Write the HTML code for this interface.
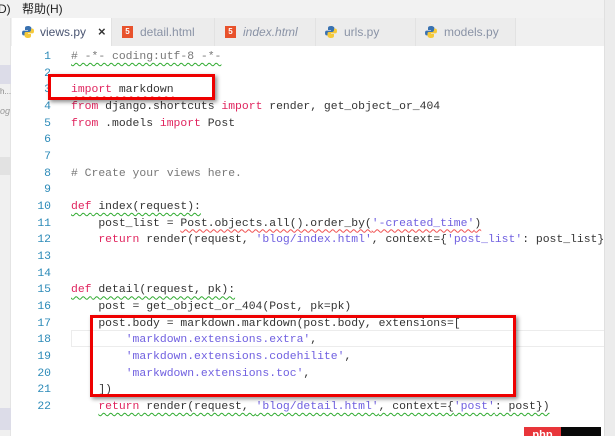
<!DOCTYPE html>
<html><head><meta charset="utf-8"><style>
*{margin:0;padding:0;box-sizing:border-box}
body{width:615px;height:436px;overflow:hidden;background:#fff;position:relative;font-family:"Liberation Sans","Noto Sans CJK SC",sans-serif}
.menu{position:absolute;left:0;top:0;width:615px;height:18px;background:#f2f2f2;font-size:12px;color:#222;line-height:18px}
.left{position:absolute;left:0;top:18px;width:11px;height:418px;background:#f0f0f0;border-right:1px solid #e4e4e4}
.tabs{position:absolute;left:11px;top:18px;width:594px;height:28px;background:#f0f0f0}
.tab{position:absolute;top:0;height:28px;background:#ececec;border-right:1px solid #e2e2e2;font-size:12px;color:#8a93a6;line-height:28px}
.tab.act{background:#fff;color:#4a5572}
.scroll{position:absolute;left:604px;top:0;width:11px;height:436px;background:#ececec;border-left:1px solid #e0e0e0}
.code{position:absolute;left:0;top:47px;width:604px;height:389px;font-family:"Liberation Mono",monospace;font-size:11.4px;line-height:16.67px;white-space:pre;color:#333}
.ln{position:absolute;top:0;left:14px;width:37px;text-align:right;color:#2b8ab8}
.tx{position:absolute;top:0;left:71px}
.k{color:#e0245e}.s{color:#6f5fe0}.c{color:#777}
.gw{text-decoration:underline wavy #2eaa2e;text-decoration-thickness:1px;text-underline-offset:3px}
.rw{text-decoration:underline wavy #f05050;text-decoration-thickness:1px;text-underline-offset:3px}
.box{position:absolute;border:3px solid #ee0000;box-shadow:2px 2px 4px rgba(0,0,0,.45)}
</style></head><body>
<div class="menu"><span style="position:absolute;left:-2px">D)</span><span style="position:absolute;left:22px">帮助(H)</span></div>
<div class="left">
<div style="position:absolute;top:47px;width:11px;height:19px;background:#dcdce8"></div>
<div style="position:absolute;top:69px;left:0;font-size:8px;color:#888">h...</div>
<div style="position:absolute;top:88px;left:0;font-size:9px;color:#999;font-style:italic">og</div>
<div style="position:absolute;top:139px;width:11px;height:18px;background:#e2e2e2"></div>
<div style="position:absolute;top:390px;width:11px;height:22px;background:#dcdce8"></div>
</div>
<div class="tabs">
<div class="tab act" style="left:1px;width:100px"><svg style="position:absolute;left:10px;top:8px" width="12" height="12" viewBox="0 0 12 12"><path d="M6 0C3 0 3 1.5 3 2.5V4h3v.6H1.5C.5 4.6 0 5.5 0 7s.6 2.4 1.5 2.4H3V8c0-1 .8-2 2-2h3c1 0 1.5-.6 1.5-1.5V2.5C9.5 1 8 0 6 0z" fill="#3a72b0"/><path d="M6 12c3 0 3-1.5 3-2.5V8H6v-.6h4.5c1 0 1.5-.9 1.5-2.4s-.6-2.4-1.5-2.4H9V4c0 1-.8 2-2 2H4c-1 0-1.5.6-1.5 1.5v2C2.5 11 4 12 6 12z" fill="#f5c93a"/></svg><span style="position:absolute;left:28px">views.py</span><span style="position:absolute;left:86px;color:#333;font-weight:bold;font-size:13px">×</span></div>
<div class="tab" style="left:101px;width:103px"><span style="position:absolute;left:10px;top:8px;width:11px;height:12px;background:#e8522c;color:#fff;font-size:8px;line-height:12px;text-align:center;font-weight:bold">5</span><span style="position:absolute;left:28px">detail.html</span></div>
<div class="tab" style="left:204px;width:101px"><span style="position:absolute;left:10px;top:8px;width:11px;height:12px;background:#e8522c;color:#fff;font-size:8px;line-height:12px;text-align:center;font-weight:bold">5</span><span style="position:absolute;left:28px;font-style:italic">index.html</span></div>
<div class="tab" style="left:305px;width:100px"><svg style="position:absolute;left:9px;top:8px" width="12" height="12" viewBox="0 0 12 12"><path d="M6 0C3 0 3 1.5 3 2.5V4h3v.6H1.5C.5 4.6 0 5.5 0 7s.6 2.4 1.5 2.4H3V8c0-1 .8-2 2-2h3c1 0 1.5-.6 1.5-1.5V2.5C9.5 1 8 0 6 0z" fill="#3a72b0"/><path d="M6 12c3 0 3-1.5 3-2.5V8H6v-.6h4.5c1 0 1.5-.9 1.5-2.4s-.6-2.4-1.5-2.4H9V4c0 1-.8 2-2 2H4c-1 0-1.5.6-1.5 1.5v2C2.5 11 4 12 6 12z" fill="#f5c93a"/></svg><span style="position:absolute;left:28px">urls.py</span></div>
<div class="tab" style="left:405px;width:100px"><svg style="position:absolute;left:9px;top:8px" width="12" height="12" viewBox="0 0 12 12"><path d="M6 0C3 0 3 1.5 3 2.5V4h3v.6H1.5C.5 4.6 0 5.5 0 7s.6 2.4 1.5 2.4H3V8c0-1 .8-2 2-2h3c1 0 1.5-.6 1.5-1.5V2.5C9.5 1 8 0 6 0z" fill="#3a72b0"/><path d="M6 12c3 0 3-1.5 3-2.5V8H6v-.6h4.5c1 0 1.5-.9 1.5-2.4s-.6-2.4-1.5-2.4H9V4c0 1-.8 2-2 2H4c-1 0-1.5.6-1.5 1.5v2C2.5 11 4 12 6 12z" fill="#f5c93a"/></svg><span style="position:absolute;left:28px">models.py</span></div>
</div>
<div style="position:absolute;left:71px;top:330px;width:540px;height:17px;border:1px solid #ececec"></div>
<div class="code" style="top:49px"><div class="ln">1
2
3
4
5
6
7
8
9
10
11
12
13
14
15
16
17
18
19
20
21
22</div><div class="tx"><span class="c gw"># -*- coding:utf-8 -*-</span>

<span class="rw"><span class="k">import</span> markdown</span>
<span class="k">from</span> django.shortcuts <span class="k">import</span> render, get_object_or_404
<span class="k">from</span> .models <span class="k">import</span> Post


<span class="c"># Create your views here.</span>

<span class="gw"><span class="k">def</span> index(request):</span>
    post_list = <span class="rw">Post.objects.all().order_by(<span class="s">'-created_time'</span>)</span>
    <span class="k">return</span> render(request, <span class="s">'blog/index.html'</span>, context={<span class="s">'post_list'</span>: post_list})


<span class="gw"><span class="k">def</span> detail(request, pk):</span>
    post = get_object_or_404(Post, pk=pk)
    post.body = markdown.markdown(post.body, extensions=[
        <span class="s">'markdown.extensions.extra'</span>,
        <span class="s">'markdown.extensions.codehilite'</span>,
        <span class="s">'markwdown.extensions.toc'</span>,
    ])
    <span class="gw"><span class="k">return</span> render(request, <span class="s">'blog/detail.html'</span>, context={<span class="s">'post'</span>: post})</span></div></div>
<div class="box" style="left:48px;top:74px;width:167px;height:26px"></div>
<div class="box" style="left:90px;top:315px;width:426px;height:82px"></div>
<div class="scroll"></div>
<div style="position:absolute;left:524px;top:427px;width:37px;height:9px;background:#e8353a;color:#fff;font-size:11px;line-height:16px;text-align:center;overflow:hidden;font-weight:bold">php</div>
<div style="position:absolute;left:561px;top:427px;width:40px;height:9px;background:#080808"></div>
</body></html>
